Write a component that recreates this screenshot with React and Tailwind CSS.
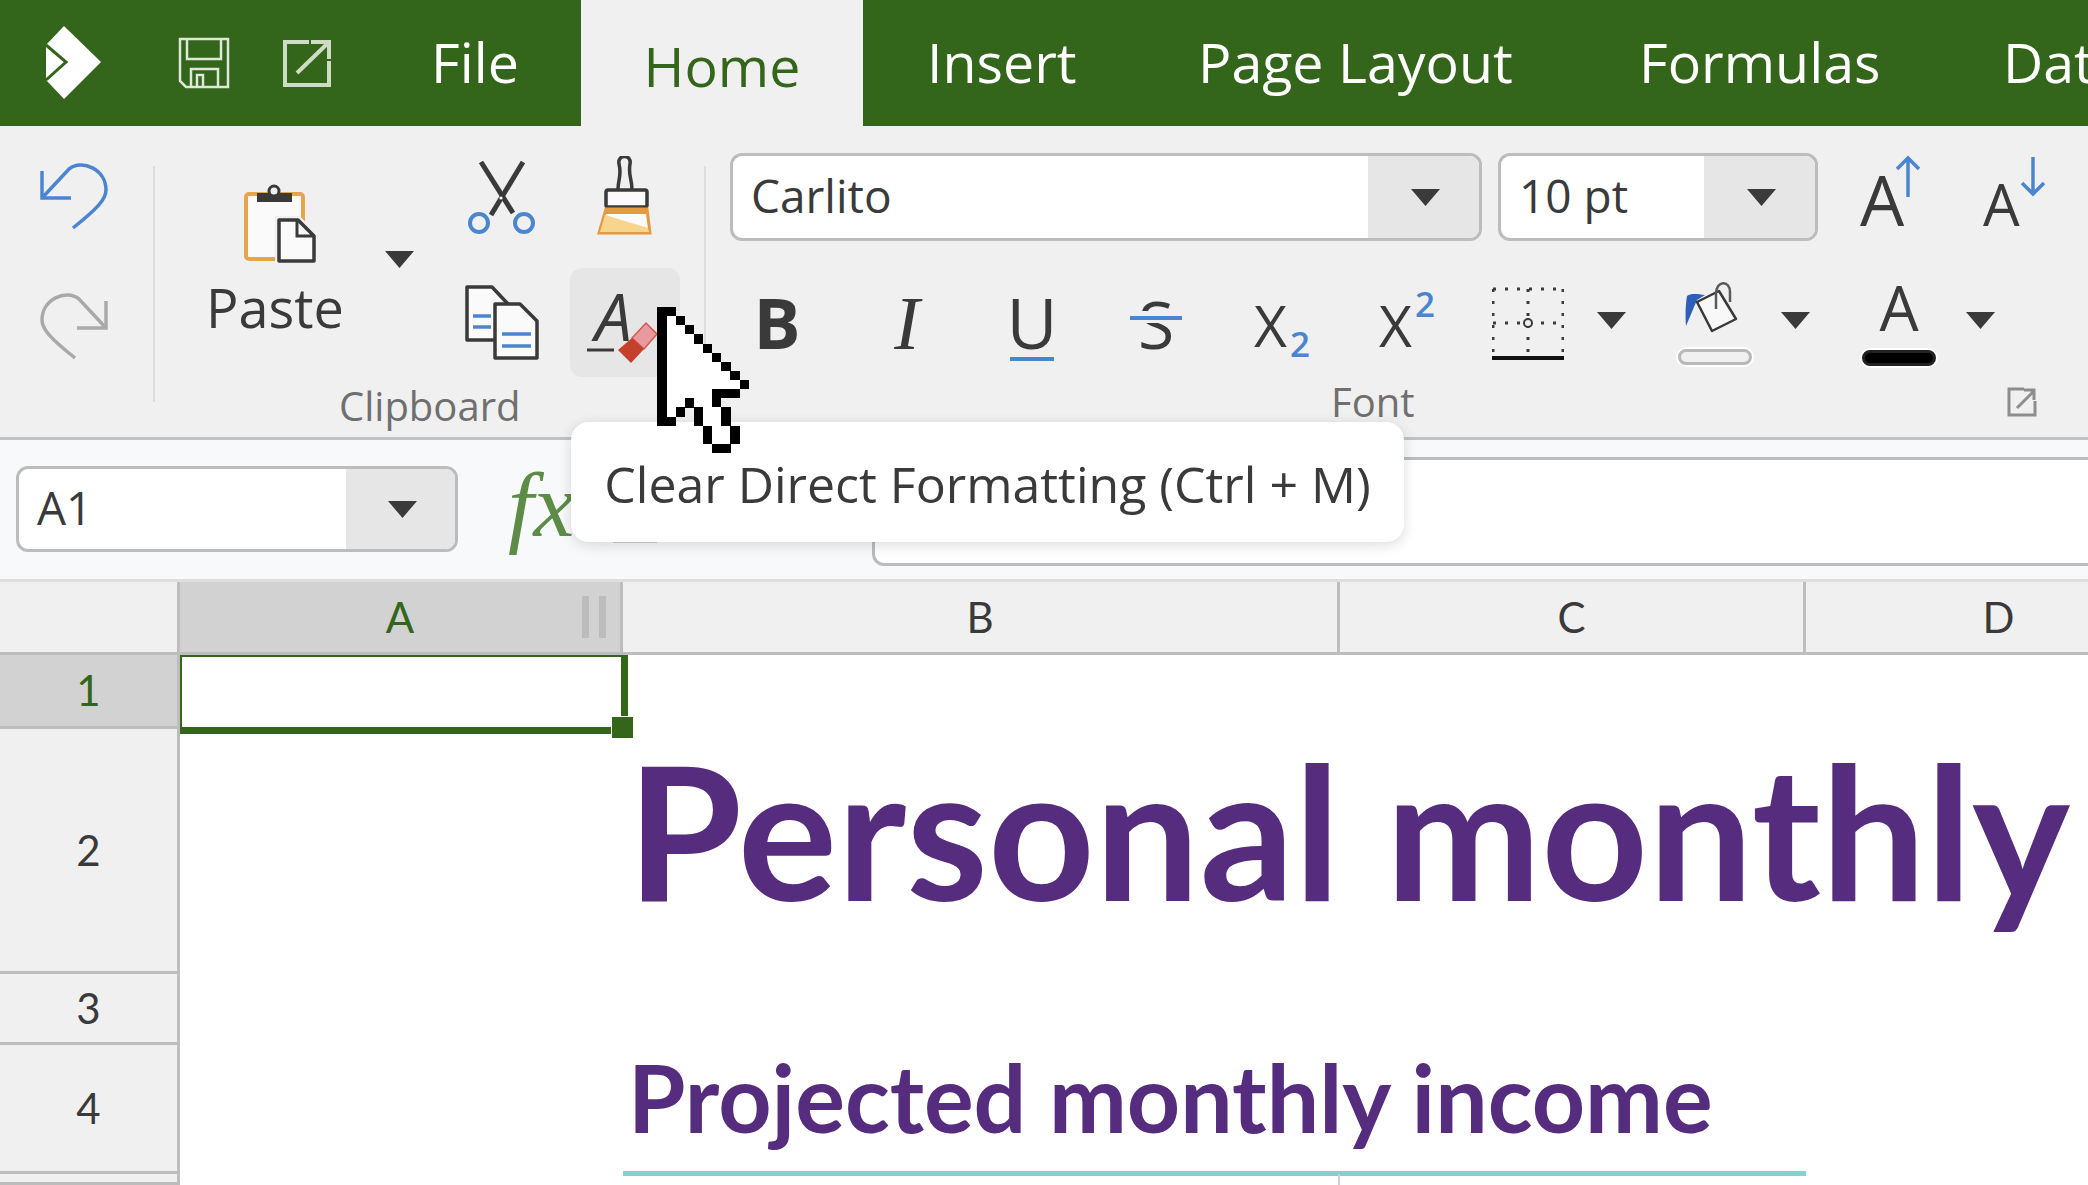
const DARK = "#3a3a3a";
const BLUE = "#4a86d0";

const Tri = ({ className = "" }) => (
  <svg width="29" height="17" viewBox="0 0 29 17" className={className}>
    <polygon points="0,0 29,0 14.5,17" fill={DARK} />
  </svg>
);

const Combo = ({ w, split, label }) => (
  <div className="flex h-[88px] overflow-hidden rounded-[12px] border-[3px] border-[#bcbcbc] bg-white" style={{ width: w }}>
    <div className="flex flex-1 items-center pb-[3px] pl-[18px] text-[46px] text-[#3a3a3a] [font-family:'Open_Sans',sans-serif]">{label}</div>
    <div className="flex items-center justify-center bg-[#e6e6e6] pl-[3px]" style={{ width: split }}>
      <Tri />
    </div>
  </div>
);

const Logo = () => (
  <svg width="58" height="74" viewBox="0 0 58 74" className="ml-[44px] shrink-0">
    <polygon points="20,0 57,36 20,73 2,54 2,19" fill="#fff" />
    <polyline points="2,19 22,36 2,54" fill="none" stroke="#33651a" strokeWidth="3" />
  </svg>
);

const SaveIcon = () => (
  <svg width="52" height="52" viewBox="0 0 52 52" fill="none" stroke="#dfe7d8" strokeWidth="2.5" className="ml-[76px] shrink-0">
    <path d="M2 2H50V50H8L2 44Z" />
    <path d="M9 2V22H43V2" />
    <path d="M13 50V32H40V50" />
    <path d="M19 50V38H25V50" />
  </svg>
);

const OpenIcon = () => (
  <svg width="48" height="48" viewBox="0 0 48 48" fill="none" stroke="#cfdcc5" strokeWidth="4" className="ml-[53px] shrink-0">
    <path d="M26 3H2V46H46V22" />
    <path d="M14 34L44 5" />
    <path d="M28 3H46V20" />
  </svg>
);

const Tab = ({ children, className = "" }) => (
  <div className={"shrink-0 whitespace-nowrap text-[55.5px] leading-none text-white [font-family:'Open_Sans',sans-serif] " + className}>{children}</div>
);

const Undo = ({ flip, color }) => (
  <svg width="68" height="70" viewBox="0 0 68 70" fill="none" stroke={color} strokeWidth="3.5" className={flip ? "-scale-x-100" : ""}>
    <path d="M2 11V38H31" />
    <path d="M2 38L29 9C42 -1 66 9 66 30C66 39 58 48 33 68" />
  </svg>
);

const PasteIcon = () => (
  <svg width="80" height="84" viewBox="0 0 80 84">
    <rect x="6" y="12" width="57" height="65" rx="3" fill="#fafafa" stroke="#e8a44a" strokeWidth="4" />
    <rect x="17" y="11" width="35" height="9" fill="#3a3a3a" />
    <circle cx="34" cy="9" r="5" fill="#f0f0f0" stroke="#3a3a3a" strokeWidth="3" />
    <path d="M39 38H58L74 54V79H39Z" fill="#fafafa" stroke="#f0f0f0" strokeWidth="8" />
    <path d="M39 38H58L74 54V79H39Z" fill="#fafafa" stroke="#3a3a3a" strokeWidth="3.5" strokeLinejoin="round" />
    <path d="M57 38V54H74" fill="none" stroke="#3a3a3a" strokeWidth="3" />
  </svg>
);

const Scissors = () => (
  <svg width="70" height="74" viewBox="0 0 70 74" fill="none">
    <path d="M14 2L46 53" stroke={DARK} strokeWidth="5" />
    <path d="M56 2L24 55" stroke={DARK} strokeWidth="5" />
    <circle cx="34" cy="38" r="1.6" fill="#fff" />
    <circle cx="12" cy="63" r="9" stroke={BLUE} strokeWidth="4" />
    <circle cx="57" cy="63" r="9" stroke={BLUE} strokeWidth="4" />
  </svg>
);

const Brush = () => (
  <svg width="56" height="80" viewBox="0 0 56 80">
    <path d="M21 34C21 22 25 20 22 8C20 -2 35 -2 33 8C31 20 35 22 35 34" fill="none" stroke={DARK} strokeWidth="3.5" />
    <rect x="9" y="34" width="41" height="17" rx="2" fill="#fafafa" stroke={DARK} strokeWidth="3.5" />
    <path d="M9 53H50L53 77H2Z" fill="#fafafa" stroke="#e59a3d" strokeWidth="3" />
    <path d="M8 59L51 72L52 76H3Z" fill="#f6d68d" />
    <path d="M9 54H50L50 58H9Z" fill="#e59a3d" />
  </svg>
);

const CopyIcon = () => (
  <svg width="76" height="76" viewBox="0 0 76 76" fill="none">
    <path d="M3 3H28L44 20V56H3Z" fill="#fafafa" stroke={DARK} strokeWidth="3.5" strokeLinejoin="round" />
    <path d="M9 32H27M9 43H27" stroke={BLUE} strokeWidth="3.5" />
    <path d="M31 20H56L73 37V74H31Z" fill="#fafafa" stroke={DARK} strokeWidth="3.5" strokeLinejoin="round" />
    <path d="M38 50H67M38 62H67" stroke={BLUE} strokeWidth="3.5" />
  </svg>
);

const ClearIcon = () => (
  <svg width="108" height="108" viewBox="0 0 108 108" className="overflow-visible">
    <text x="24" y="72" fontSize="66" fontStyle="italic" fill={DARK} fontFamily="'Open Sans',sans-serif">A</text>
    <path d="M16 81H43" stroke={DARK} strokeWidth="3" />
    <path d="M61 69L75 54L86 65L73 80Z" fill="#e99a9e" stroke="#cf5a4c" strokeWidth="1.5" />
    <path d="M61 69L73 80L60 94L47 81Z" fill="#c4402b" />
  </svg>
);

const Grow = () => (
  <svg width="66" height="84" viewBox="0 0 66 84" className="overflow-visible">
    <text x="0" y="76" fontSize="70" fill={DARK} fontFamily="'Open Sans',sans-serif">A</text>
    <path d="M48 47V8M37 19L48 8L59 19" fill="none" stroke={BLUE} strokeWidth="3.5" />
  </svg>
);

const Shrink = () => (
  <svg width="68" height="84" viewBox="0 0 68 84" className="overflow-visible">
    <text x="0" y="76" fontSize="58" fill={DARK} fontFamily="'Open Sans',sans-serif">A</text>
    <path d="M50 7V44M39 33L50 44L61 33" fill="none" stroke={BLUE} strokeWidth="3.5" />
  </svg>
);

const BoldIcon = () => (
  <svg width="54" height="84" viewBox="0 0 54 84" className="shrink-0 overflow-visible">
    <text x="27" y="66" textAnchor="middle" fontSize="70" fontWeight="700" fill={DARK} fontFamily="'Open Sans',sans-serif">B</text>
  </svg>
);

const ItalicIcon = () => (
  <svg width="34" height="84" viewBox="0 0 34 84" className="ml-[86px] shrink-0 overflow-visible">
    <text x="17" y="66" textAnchor="middle" fontSize="76" fontStyle="italic" fill={DARK} fontFamily="'Liberation Serif',serif">I</text>
  </svg>
);

const UnderlineIcon = () => (
  <svg width="46" height="84" viewBox="0 0 46 84" className="ml-[85px] shrink-0 overflow-visible">
    <text x="23" y="66" textAnchor="middle" fontSize="70" fill={DARK} fontFamily="'Open Sans',sans-serif">U</text>
    <path d="M1 76H45" stroke={BLUE} strokeWidth="4" />
  </svg>
);

const StrikeIcon = () => (
  <svg width="52" height="84" viewBox="0 0 52 84" className="ml-[75px] shrink-0 overflow-visible">
    <text x="26" y="66" textAnchor="middle" fontSize="66" fill={DARK} fontFamily="'Open Sans',sans-serif">S</text>
    <rect x="10" y="28" width="32" height="12" fill="#f0f0f0" />
    <path d="M0 35H52" stroke={BLUE} strokeWidth="4" />
  </svg>
);

const ScriptIcon = ({ ml, sup }) => (
  <svg width="60" height="84" viewBox="0 0 60 84" className="shrink-0 overflow-visible" style={{ marginLeft: ml }}>
    <text x="0" y="64" fontSize="57" fill={DARK} fontFamily="'Open Sans',sans-serif">X</text>
    <text x="36" y={sup ? 34 : 74} fontSize="35" fontWeight="600" fill={BLUE} fontFamily="'Open Sans',sans-serif">2</text>
  </svg>
);

const BorderIcon = () => (
  <svg width="72" height="74" viewBox="0 0 72 74" className="ml-[53px] mt-[4px] shrink-0" fill="none">
    <path d="M1 2H71M1 2V66M71 2V66M36 2V66M1 36H71" stroke={DARK} strokeWidth="3" strokeDasharray="3 9" />
    <circle cx="36" cy="36" r="4" stroke={DARK} strokeWidth="2" fill="#f0f0f0" />
    <path d="M0 71H72" stroke="#111" strokeWidth="4" />
  </svg>
);

const FillIcon = () => (
  <div className="ml-[52px] flex w-[74px] shrink-0 flex-col">
    <svg width="60" height="52" viewBox="0 0 60 52" className="ml-[1px] -mt-[1px]">
      <path d="M7 44C6 30 7 20 8 14C12 11 18 12 26 13L18 18Z" fill="#2c5fb8" />
      <path d="M18 20L40 9L57 37L33 49Z" fill="#f8f8f8" stroke={DARK} strokeWidth="2.5" strokeLinejoin="round" />
      <path d="M37 27V12C37 -2 51 -2 51 10V20" fill="none" stroke="#5a5a5a" strokeWidth="2.5" />
    </svg>
    <div className="mt-[15px] h-[16px] w-[74px] rounded-full border-[3px] border-[#b8b8b8] bg-[#f0f0f0] shadow-[0_0_0_2px_#fff]" />
  </div>
);

const ColorA = () => (
  <div className="ml-[52px] flex w-[74px] shrink-0 flex-col items-center">
    <svg width="44" height="50" viewBox="0 0 44 50" className="mt-[1px] overflow-visible">
      <text x="22" y="47" textAnchor="middle" fontSize="62" fill={DARK} fontFamily="'Open Sans',sans-serif">A</text>
    </svg>
    <div className="mt-[16px] h-[16px] w-[74px] rounded-full border-[3px] border-[#222] bg-black shadow-[0_0_0_2px_#fff]" />
  </div>
);

const Launcher = () => (
  <svg width="30" height="30" viewBox="0 0 30 30" fill="none" stroke="#8d8d8d" strokeWidth="3" className="ml-auto mr-[51px]">
    <path d="M17 2H2V28H28V14" />
    <path d="M10 21L27 4M17 3H27V13" />
  </svg>
);

const cursorRows = [
  "XX........",
  "XWX.......",
  "XWWX......",
  "XWWWX.....",
  "XWWWWX....",
  "XWWWWWX...",
  "XWWWWWWX..",
  "XWWWWWWWX.",
  "XWWWWWWWWX",
  "XWWWWWXXX.",
  "XWWXWWX...",
  "XWX.XWWX..",
  "XX..XWWX..",
  ".....XWWX.",
  ".....XWWX.",
  "......XX..",
];

const Cursor = () => (
  <svg width="92" height="146" viewBox="0 0 10 16" shapeRendering="crispEdges" className="absolute left-[657px] top-[307px]">
    {cursorRows.flatMap((r, y) =>
      r.split("").map((c, x) =>
        c === "." ? null : <rect key={x + "-" + y} x={x} y={y} width="1.02" height="1.02" fill={c === "X" ? "#000" : "#fff"} />
      )
    )}
  </svg>
);

const HeadCell = ({ children, active }) => (
  <div className={"relative flex items-center justify-center border-b-[3px] border-r-[3px] border-[#bdbdbd] text-[42px] [font-family:'Lato',sans-serif] " + (active ? "bg-[#d2d2d2] text-[#33651a]" : "bg-[#f0f0f0] text-[#3a3a3a]")}>{children}</div>
);

const RowHead = ({ n, active }) => (
  <div className={"flex items-center justify-center border-b-[3px] border-r-[3px] border-[#bdbdbd] text-[42px] [font-family:'Lato',sans-serif] " + (active ? "bg-[#d2d2d2] text-[#33651a]" : "bg-[#f0f0f0] text-[#3a3a3a]")}>{n}</div>
);

export default function App() {
  return (
    <div className="relative flex h-[1185px] w-[2088px] flex-col overflow-hidden bg-white">
      {/* Title / tabs */}
      <div className="flex h-[126px] shrink-0 items-center overflow-hidden bg-[#33651a]">
        <Logo />
        <SaveIcon />
        <OpenIcon />
        <Tab className="ml-[100px] -mt-[2px] w-[150px]">File</Tab>
        <div className="flex h-[126px] w-[282px] shrink-0 items-center justify-center bg-[#f0f0f0] pt-[6px] text-[55.5px] text-[#33651a] [font-family:'Open_Sans',sans-serif]">Home</div>
        <Tab className="ml-[64px] -mt-[2px] w-[271px]">Insert</Tab>
        <Tab className="-mt-[2px] w-[441px]">Page Layout</Tab>
        <Tab className="-mt-[2px] w-[364px]">Formulas</Tab>
        <Tab className="-mt-[2px]">Data</Tab>
      </div>

      {/* Ribbon */}
      <div className="flex h-[314px] shrink-0 border-b-[3px] border-[#c2c2c2] bg-[#f0f0f0]">
        <div className="flex w-[153px] shrink-0 flex-col gap-[60px] pl-[40px] pt-[34px]">
          <Undo color={BLUE} />
          <Undo flip color="#a9a9a9" />
        </div>
        <div className="mt-[40px] h-[236px] w-[2px] shrink-0 bg-[#dcdcdc]" />
        <div className="flex w-[549px] shrink-0 flex-col">
          <div className="flex h-[256px]">
            <div className="ml-[53px] flex w-[134px] shrink-0 flex-col items-center pt-[56px]">
              <div className="ml-[10px]"><PasteIcon /></div>
              <div className="mt-[11px] text-[54px] leading-[60px] text-[#3a3a3a] [font-family:'Open_Sans',sans-serif]">Paste</div>
            </div>
            <Tri className="ml-[43px] mt-[125px] shrink-0" />
            <div className="ml-[50px] flex w-[76px] shrink-0 flex-col items-center pt-[34px]">
              <Scissors />
              <div className="mt-[50px]"><CopyIcon /></div>
            </div>
            <div className="ml-[30px] flex w-[110px] shrink-0 flex-col items-center pt-[30px]">
              <Brush />
              <div className="mt-[32px] flex h-[109px] w-[110px] items-center justify-center rounded-[12px] bg-[#e6e6e6]">
                <ClearIcon />
              </div>
            </div>
          </div>
          <div className="pl-[184px] text-[40px] leading-[48px] text-[#6f6f6f] [font-family:'Open_Sans',sans-serif]">Clipboard</div>
        </div>
        <div className="mt-[40px] h-[236px] w-[2px] shrink-0 bg-[#dcdcdc]" />
        <div className="flex min-w-0 flex-1 flex-col">
          <div className="flex items-start pl-[24px] pt-[27px]">
            <Combo w={752} split={111} label="Carlito" />
            <div className="ml-[16px]"><Combo w={320} split={111} label="10 pt" /></div>
            <div className="ml-[42px] -mt-[3px]"><Grow /></div>
            <div className="ml-[57px] -mt-[3px]"><Shrink /></div>
          </div>
          <div className="mt-[42px] flex h-[84px] items-start pl-[44px]">
            <BoldIcon />
            <ItalicIcon />
            <UnderlineIcon />
            <StrikeIcon />
            <ScriptIcon ml={72} />
            <ScriptIcon ml={65} sup />
            <BorderIcon />
            <Tri className="ml-[33px] mt-[29px] shrink-0" />
            <FillIcon />
            <Tri className="ml-[29px] mt-[29px] shrink-0" />
            <ColorA />
            <Tri className="ml-[30px] mt-[29px] shrink-0" />
          </div>
          <div className="mt-[11px] flex items-center pl-[625px]">
            <div className="text-[40px] leading-[48px] text-[#6f6f6f] [font-family:'Open_Sans',sans-serif]">Font</div>
            <Launcher />
          </div>
        </div>
      </div>

      {/* Formula bar */}
      <div className="flex h-[142px] shrink-0 items-start border-b-[3px] border-[#dedede] bg-[#f8f9fa]">
        <div className="ml-[16px] mt-[26px] flex h-[86px] w-[442px] shrink-0 overflow-hidden rounded-[12px] border-[3px] border-[#bcbcbc] bg-white">
          <div className="flex flex-1 items-center pb-[3px] pl-[18px] text-[46px] text-[#3a3a3a] [font-family:'Open_Sans',sans-serif]">A1</div>
          <div className="flex w-[109px] items-center justify-center bg-[#e6e6e6] pl-[3px]"><Tri /></div>
        </div>
        <div className="ml-[50px] mt-[20px] w-[105px] shrink-0 text-[92px] italic leading-[90px] text-[#5c8c46] [font-family:'Liberation_Serif',serif]">fx</div>
        <div className="mt-[50px] h-[53px] w-[44px] shrink-0 border-b-[2px] border-[#cfcfcf]" />
        <div className="ml-[215px] mt-[17px] h-[109px] min-w-0 flex-1 rounded-l-[12px] border-[3px] border-r-0 border-[#bcbcbc] bg-white" />
      </div>

      {/* Sheet */}
      <div className="grid w-[2194px] flex-1 grid-cols-[180px_443px_717px_466px_388px] grid-rows-[73px_74px_245px_71px_129px_1fr]">
        <HeadCell />
        <HeadCell active>
          A
          <span className="absolute left-[402px] top-[14px] h-[42px] w-[24px] border-x-[7px] border-[#bcbcbc]" />
        </HeadCell>
        <HeadCell>B</HeadCell>
        <HeadCell>C</HeadCell>
        <HeadCell>D</HeadCell>

        <RowHead n="1" active />
        <div className="relative -mb-[5px] -mr-[5px] border-b-[7px] border-l-[2px] border-r-[7px] border-t-[2px] border-[#33651a]">
          <div className="absolute -bottom-[12px] -right-[13px] h-[23px] w-[23px] border border-white bg-[#33651a]" />
        </div>
        <div className="col-span-3" />

        <RowHead n="2" />
        <div />
        <div className="col-span-3 whitespace-nowrap pl-[4px] text-[186px] font-bold leading-[200px] text-[#562c7f] [font-family:'Lato',sans-serif]">Personal monthly</div>

        <RowHead n="3" />
        <div className="col-span-4" />

        <RowHead n="4" />
        <div />
        <div className="col-span-2 flex h-[131px] flex-col justify-between">
          <div className="whitespace-nowrap pl-[5px] pt-[4px] text-[93px] font-bold leading-[96px] text-[#562c7f] [font-family:'Lato',sans-serif]">Projected monthly income</div>
          <div className="h-[5px] bg-[#82d0d0]" />
        </div>
        <div />

        <RowHead n="" />
        <div />
        <div className="border-r-[2px] border-[#cfcfcf]" />
        <div className="col-span-2" />
      </div>

      {/* Tooltip */}
      <div className="absolute left-[571px] top-[422px] flex h-[120px] w-[833px] items-center justify-center rounded-[18px] bg-white pt-[5px] text-[50px] text-[#3a3a3a] shadow-[0_3px_14px_rgba(0,0,0,0.14)] [font-family:'Open_Sans',sans-serif]">
        Clear Direct Formatting (Ctrl + M)
      </div>
      <Cursor />
    </div>
  );
}
